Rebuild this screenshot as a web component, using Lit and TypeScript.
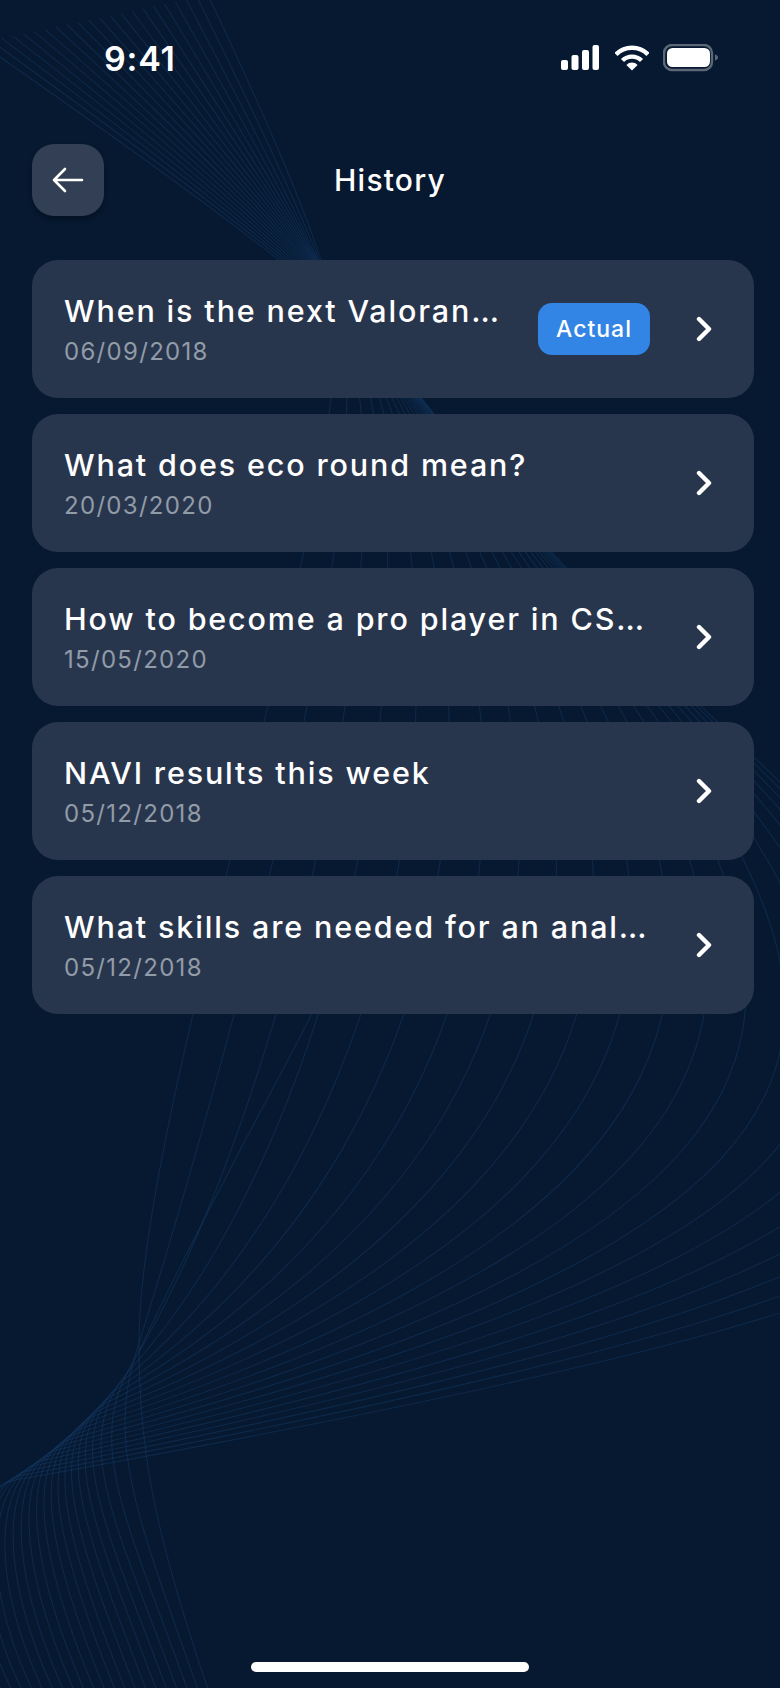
import { LitElement, html, css, svg } from "lit";
import { customElement } from "lit/decorators.js";

type Pt = [number, number];
const lerp = (a: number, b: number, t: number) => a + (b - a) * t;
const lp = (a: Pt, b: Pt, t: number): Pt => [lerp(a[0], b[0], t), lerp(a[1], b[1], t)];
const unit = (a: Pt, b: Pt): Pt => {
  const dx = b[0] - a[0], dy = b[1] - a[1];
  const l = Math.hypot(dx, dy) || 1;
  return [dx / l, dy / l];
};
const quad = (a: Pt, c: Pt, b: Pt, t: number): Pt => lp(lp(a, c, t), lp(c, b, t), t);

function wavePath(t: number): string {
  const S = lp([208, -5], [-20, 43], t);
  const A = lp([332, 300], [400, 370], t);
  const P1 = lp([365, 450], [960, 1110], t);
  const P2 = lp([140, 1100], [1700, 1180], t);
  const B = quad([139, 1340], [125, 1415], [15, 1480], Math.pow(t, 0.8));
  const E = lp([209, 1692], [-8, 1692], t);
  const dA = unit(A, P1);
  const inLen = lerp(80, 90, t);
  const C2: Pt = [A[0] - dA[0] * inLen, A[1] - dA[1] * inLen];
  const C1 = lp(S, C2, 0.35);
  const dB = unit(P2, B);
  const outLen = lerp(100, 40, t);
  const D1: Pt = [B[0] + dB[0] * outLen, B[1] + dB[1] * outLen];
  const D2 = lp([150, 1520], [-72, 1570], t);
  const f = (p: Pt) => `${p[0].toFixed(1)} ${p[1].toFixed(1)}`;
  return `M${f(S)} C${f(C1)} ${f(C2)} ${f(A)} C${f(P1)} ${f(P2)} ${f(B)} C${f(D1)} ${f(D2)} ${f(E)}`;
}

const WAVES = [
  ...Array.from({ length: 22 }, (_, i) => wavePath(i / 21)),
  "M312 1013 C290 1060 215 1190 139 1351",
];

interface Item { title: string; date: string; actual?: boolean }
const ITEMS: Item[] = [
  { title: "When is the next Valoran…", date: "06/09/2018", actual: true },
  { title: "What does eco round mean?", date: "20/03/2020" },
  { title: "How to become a pro player in CS…", date: "15/05/2020" },
  { title: "NAVI results this week", date: "05/12/2018" },
  { title: "What skills are needed for an anal…", date: "05/12/2018" },
];

@customElement("app-root")
export class AppRoot extends LitElement {
  static styles = css`
    :host {
      display: block;
      width: 780px;
      height: 1688px;
      font-family: Inter, "Noto Sans", sans-serif;
      color: #fff;
    }
    .screen {
      position: relative;
      width: 780px;
      height: 1688px;
      background: #061930;
      overflow: hidden;
      display: flex;
      flex-direction: column;
    }
    .waves {
      position: absolute;
      inset: 0;
      width: 780px;
      height: 1688px;
    }
    .waves path {
      fill: none;
      stroke: rgb(30, 75, 130);
      stroke-opacity: 0.32;
      stroke-width: 1.1;
    }
    .status, .header, .list, .home-row {
      position: relative;
    }
    .status {
      height: 116px;
      box-sizing: border-box;
      padding: 39px 62px 0 104px;
      display: flex;
      justify-content: space-between;
      align-items: flex-start;
    }
    .time {
      font-size: 34px;
      line-height: 40px;
      font-weight: 600;
      letter-spacing: 0.8px;
    }
    .sys {
      display: flex;
      align-items: flex-start;
      margin-top: 6px;
    }
    .sys svg { display: block; }
    .signal { width: 38px; height: 26px; margin-right: 16px; }
    .wifi { width: 34px; height: 26px; margin-right: 14px; }
    .battery { width: 55px; height: 28px; margin-top: -1px; }
    .header {
      height: 72px;
      margin-top: 28px;
      padding: 0 32px;
      display: flex;
      align-items: center;
    }
    .back {
      width: 72px;
      height: 72px;
      box-sizing: border-box;
      border-radius: 22px;
      background: #333f54;
      box-shadow: 0 3px 5px rgba(0, 0, 0, 0.3);
      display: flex;
      align-items: center;
      justify-content: center;
    }
    .back svg { width: 34px; height: 26px; display: block; }
    .heading {
      position: absolute;
      left: 0;
      right: 0;
      text-align: center;
      font-size: 30px;
      line-height: 36px;
      font-weight: 450;
      letter-spacing: 1.2px;
    }
    .list {
      margin-top: 44px;
      padding: 0 26px 0 32px;
      display: flex;
      flex-direction: column;
      gap: 16px;
    }
    .card {
      height: 138px;
      box-sizing: border-box;
      padding: 0 42px 0 32px;
      border-radius: 26px;
      background: #28364d;
      display: flex;
      align-items: center;
    }
    .text {
      flex: 1;
      min-width: 0;
    }
    .title {
      font-size: 30.5px;
      line-height: 38px;
      font-weight: 450;
      letter-spacing: 1.85px;
      white-space: nowrap;
    }
    .date {
      margin-top: 7px;
      font-size: 24px;
      line-height: 30px;
      font-weight: 400;
      letter-spacing: 1.3px;
      color: #929ba8;
    }
    .badge {
      width: 112px;
      height: 52px;
      box-sizing: border-box;
      border-radius: 14px;
      background: #3385e5;
      font-size: 23px;
      font-weight: 450;
      letter-spacing: 1px;
      display: flex;
      align-items: center;
      justify-content: center;
      margin-right: 46px;
    }
    .chev { width: 16px; height: 26px; display: block; flex: none; }
    .home-row {
      margin-top: auto;
      padding-bottom: 16px;
      display: flex;
      justify-content: center;
    }
    .home {
      width: 278px;
      height: 10px;
      border-radius: 5px;
      background: #fff;
    }
  `;

  private chevron() {
    return html`<svg class="chev" viewBox="0 0 16 26" fill="none" stroke="#fff" stroke-width="4.4" stroke-linecap="round" stroke-linejoin="round"><path d="M3 3l10 10L3 23"/></svg>`;
  }

  render() {
    return html`
      <div class="screen">
        <svg class="waves" viewBox="0 0 780 1688">
          ${WAVES.map((d) => svg`<path d=${d}></path>`)}
        </svg>
        <div class="status">
          <div class="time">9:41</div>
          <div class="sys">
            <svg class="signal" viewBox="0 0 38 26" fill="#fff">
              <rect x="0" y="15" width="7" height="10" rx="2"/>
              <rect x="10.5" y="10" width="7" height="15" rx="2"/>
              <rect x="21" y="5" width="7" height="20" rx="2"/>
              <rect x="31.5" y="0" width="6.5" height="25" rx="2"/>
            </svg>
            <svg class="wifi" viewBox="0 0 34 26">
              <path d="M17 25.5l-5.6-5.6a8 8 0 0 1 11.2 0z" fill="#fff"/>
              <path d="M7.5 15.5a13.5 13.5 0 0 1 19 0M1 9.4a22.6 22.6 0 0 1 32 0" fill="none" stroke="#fff" stroke-width="4.4"/>
            </svg>
            <svg class="battery" viewBox="0 0 55 28">
              <rect x="1" y="1" width="48" height="25" rx="8" fill="none" stroke="#5c6878" stroke-width="2.4"/>
              <rect x="4" y="4" width="43" height="19" rx="5.5" fill="#fff"/>
              <path d="M52 10.5c2 .6 3 1.6 3 3s-1 2.4-3 3z" fill="#5c6878"/>
            </svg>
          </div>
        </div>
        <div class="header">
          <div class="back">
            <svg viewBox="0 0 34 26" fill="none" stroke="#fff" stroke-width="2.6" stroke-linecap="round" stroke-linejoin="round"><path d="M3 13h28M14 2L3 13l11 11"/></svg>
          </div>
          <div class="heading">History</div>
        </div>
        <div class="list">
          ${ITEMS.map(
            (it) => html`
              <div class="card">
                <div class="text">
                  <div class="title">${it.title}</div>
                  <div class="date">${it.date}</div>
                </div>
                ${it.actual ? html`<div class="badge">Actual</div>` : null}
                ${this.chevron()}
              </div>
            `
          )}
        </div>
        <div class="home-row"><div class="home"></div></div>
      </div>
    `;
  }
}
